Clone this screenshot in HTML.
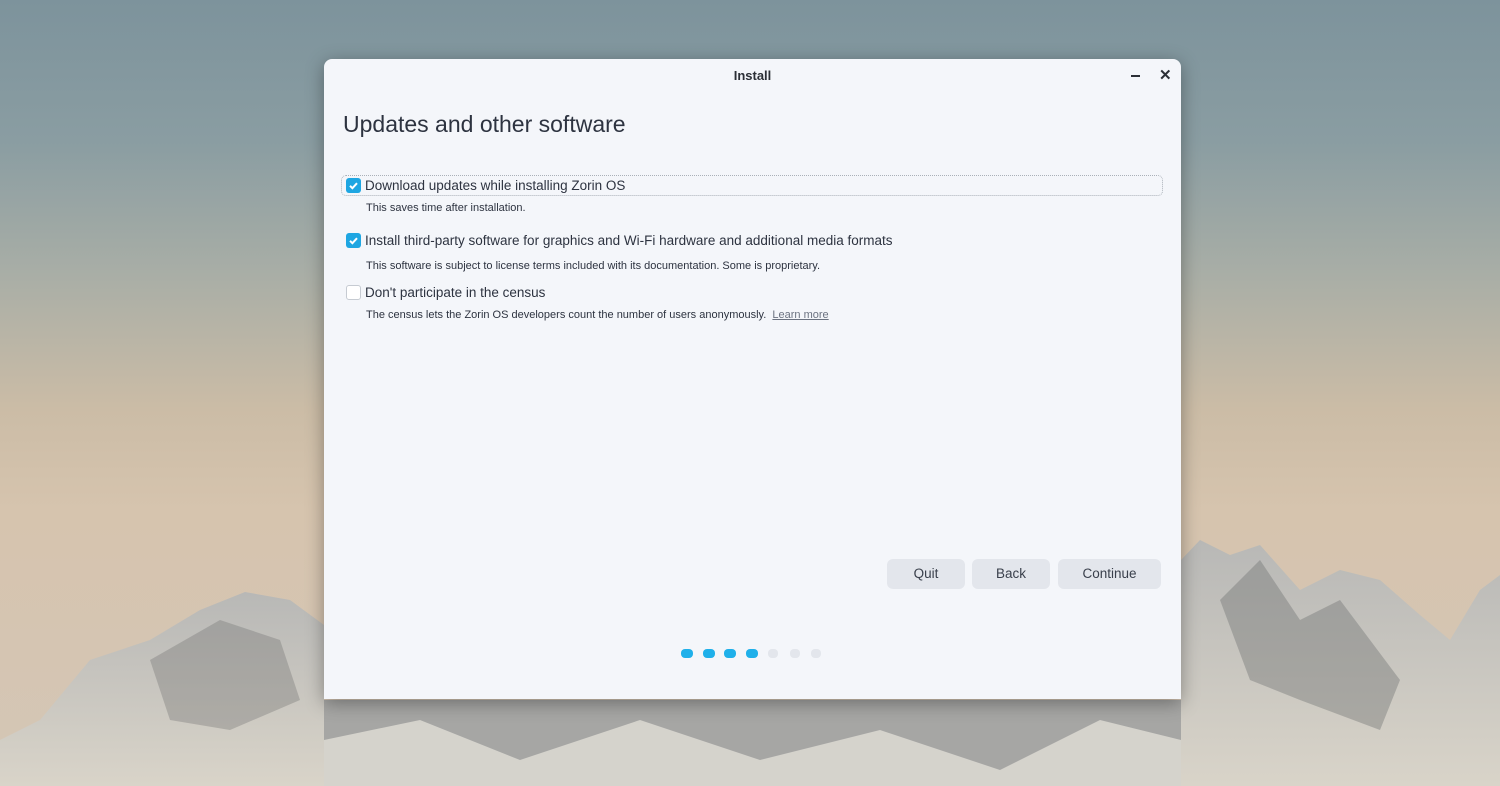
<!DOCTYPE html>
<html><head><style>
*{margin:0;padding:0;box-sizing:border-box}
body{width:1500px;height:786px;overflow:hidden;position:relative;font-family:"Liberation Sans",sans-serif;
background:linear-gradient(180deg,#7d939c 0%,#8a9da2 18%,#a9aea6 35%,#cbbca6 52%,#d6c4ae 65%,#d4c6b6 100%)}
svg.bg{position:absolute;left:0;top:0}
.win{position:absolute;left:324px;top:59px;width:857px;height:640px;background:#f4f6fa;border-radius:8px 8px 0 0;box-shadow:0 4px 18px rgba(0,0,0,.35)}
.title{position:absolute;top:9px;width:100%;text-align:center;font-size:13px;font-weight:bold;color:#2b2f36}
.h1{position:absolute;left:19px;top:52px;font-size:23px;color:#2d3340}
.row{position:absolute;left:22px;font-size:13.5px;color:#2d3340}
.cb{position:absolute;left:0;top:0;width:15px;height:15px;border-radius:3px;background:#1ea6e2}
.cb.off{background:#fff;border:1px solid #c6cbd2}
.lbl{position:absolute;left:19px;top:0px;white-space:nowrap}
.sub{position:absolute;left:42px;font-size:11px;color:#2d3340;white-space:nowrap}
.btn{position:absolute;top:500px;height:30px;background:#e3e6ec;border-radius:6px;font-size:13.5px;color:#3a404c;text-align:center;line-height:30px}
.dot{position:absolute;top:590px;width:12px;height:9px;border-radius:4px;background:#1fb0ea}
.dot.off{background:#e3e6ec}
</style></head><body>
<svg class="bg" width="1500" height="786">
<defs><linearGradient id="m" x1="0" y1="0" x2="0" y2="1"><stop offset="0" stop-color="#b8b8b6"/><stop offset="1" stop-color="#d9d4c9"/></linearGradient></defs>
<polygon fill="url(#m)" points="0,740 40,720 90,660 150,640 200,610 245,592 290,600 324,625 324,786 0,786"/>
<polygon fill="url(#m)" points="1181,560 1200,540 1230,555 1260,545 1300,590 1340,570 1380,580 1420,615 1450,640 1480,590 1500,575 1500,786 1181,786"/>
<polygon fill="#a6a6a4" points="324,700 1181,700 1181,786 324,786"/>
<polygon fill="#e4e1da" opacity=".75" points="324,740 420,720 520,760 640,720 760,760 880,730 1000,770 1100,720 1181,740 1181,786 324,786"/>
<polygon fill="#6f7070" opacity=".4" points="1220,600 1260,560 1300,620 1340,600 1400,680 1380,730 1300,700 1250,680"/>
<polygon fill="#6f7070" opacity=".35" points="150,660 220,620 280,640 300,700 230,730 170,720"/>
</svg>
<div class="win">
<div class="title">Install</div>
<div style="position:absolute;left:807px;top:16px;width:9px;height:2px;background:#2b2f36"></div>
<div style="position:absolute;left:835px;top:7px;font-size:15px;font-weight:bold;color:#2b2f36">✕</div>
<div class="h1">Updates and other software</div>
<div style="position:absolute;left:17px;top:116px;width:822px;height:21px;border:1px dotted #aab0b8;border-radius:5px"></div>
<div class="row" style="top:119px"><div class="cb"><svg width="15" height="15"><path d="M4 7.8l2.4 2.4 4.6-5" stroke="#fff" stroke-width="2" fill="none"/></svg></div><div class="lbl">Download updates while installing Zorin OS</div></div>
<div class="sub" style="top:143px">This saves time after installation.</div>
<div class="row" style="top:174px"><div class="cb"><svg width="15" height="15"><path d="M4 7.8l2.4 2.4 4.6-5" stroke="#fff" stroke-width="2" fill="none"/></svg></div><div class="lbl">Install third-party software for graphics and Wi-Fi hardware and additional media formats</div></div>
<div class="sub" style="top:201px">This software is subject to license terms included with its documentation. Some is proprietary.</div>
<div class="row" style="top:226px"><div class="cb off"></div><div class="lbl">Don't participate in the census</div></div>
<div class="sub" style="top:250px">The census lets the Zorin OS developers count the number of users anonymously. &nbsp;<span style="color:#6b7280;text-decoration:underline">Learn more</span></div>
<div class="btn" style="left:563px;width:78px">Quit</div>
<div class="btn" style="left:648px;width:78px">Back</div>
<div class="btn" style="left:734px;width:103px">Continue</div>
<div class="dot" style="left:357px"></div><div class="dot" style="left:379px"></div><div class="dot" style="left:400px"></div><div class="dot" style="left:422px"></div>
<div class="dot off" style="left:444px;width:10px"></div><div class="dot off" style="left:466px;width:10px"></div><div class="dot off" style="left:487px;width:10px"></div>
</div>
</body></html>
